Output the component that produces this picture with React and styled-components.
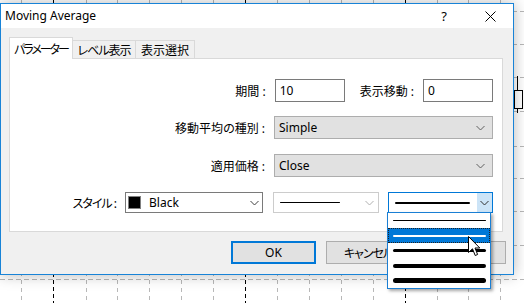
import React from 'react';
import styled, { createGlobalStyle } from 'styled-components';

const Global = createGlobalStyle`
  html, body {
    margin: 0;
    padding: 0;
    background: #fff;
  }
  body {
    font-family: "Noto Sans", "Noto Sans CJK JP", sans-serif;
    font-size: 12px;
    color: #000;
    font-feature-settings: "palt";
  }
`;

const Stage = styled.div`
  position: relative;
  width: 524px;
  height: 303px;
  overflow: hidden;
  background: #fff;
`;

const Chart = styled.svg`
  position: absolute;
  left: 0;
  top: 0;
`;

const Window = styled.div`
  position: absolute;
  left: 0;
  top: 3px;
  width: 514px;
  height: 272px;
  box-sizing: border-box;
  border: 1px solid #1883d7;
  background: #f0f0f0;
  display: flex;
  flex-direction: column;
  box-shadow: 0 0 14px rgba(0, 0, 0, 0.28);
`;

const TitleBar = styled.div`
  height: 24px;
  background: #fff;
  display: flex;
  align-items: center;
  padding-left: 4px;
`;

const Title = styled.div`
  flex: 1;
  padding-bottom: 2px;
`;

const CaptionButton = styled.div`
  width: 46px;
  height: 24px;
  display: flex;
  align-items: center;
  justify-content: center;
  font-size: 13px;
`;

const Body = styled.div`
  flex: 1;
  padding: 9px 10px 10px 8px;
  display: flex;
  flex-direction: column;
`;

const TabStrip = styled.div`
  display: flex;
  align-items: flex-end;
  height: 21px;
`;

const Tab = styled.div`
  position: relative;
  box-sizing: border-box;
  width: ${(p) => p.$w}px;
  display: flex;
  align-items: center;
  justify-content: center;
  white-space: nowrap;
  letter-spacing: ${(p) => p.$ls || 0}px;
  border: 1px solid #d9d9d9;
  border-bottom: none;
  ${(p) => (p.$first ? '' : 'border-left: none;')}
  height: ${(p) => (p.$active ? '22px' : '18px')};
  margin-bottom: ${(p) => (p.$active ? '-1px' : '0')};
  background: ${(p) => (p.$active ? '#fff' : '#f0f0f0')};
  z-index: ${(p) => (p.$active ? 1 : 0)};
`;

const Panel = styled.div`
  height: 174px;
  box-sizing: border-box;
  background: #fff;
  border: 1px solid #d9d9d9;
  padding: 20px 9px 0 0;
  display: flex;
  flex-direction: column;
  gap: 15px;
`;

const Row = styled.div`
  display: flex;
  justify-content: flex-end;
  align-items: center;
  height: ${(p) => p.$h || 23}px;
  gap: 9px;
`;

const Label = styled.div`
  white-space: nowrap;
  letter-spacing: ${(p) => p.$ls || 0}px;
  margin-left: ${(p) => p.$ml || 0}px;
`;

const Field = styled.div`
  box-sizing: border-box;
  width: 70px;
  height: 23px;
  border: 1px solid #7a7a7a;
  background: #fff;
  display: flex;
  align-items: center;
  padding-left: 4px;
`;

const Select = styled.div`
  box-sizing: border-box;
  width: 219px;
  height: 23px;
  border: 1px solid #adadad;
  background: #e1e1e1;
  display: flex;
  align-items: center;
  justify-content: space-between;
  padding: 0 7px 0 4px;
`;

const Combo = styled.div`
  position: relative;
  box-sizing: border-box;
  width: ${(p) => p.$w}px;
  height: 21px;
  border: 1px solid ${(p) => p.$border};
  background: #fff;
  display: flex;
  align-items: center;
  margin-left: ${(p) => p.$ml || 0}px;
`;

const Swatch = styled.div`
  width: 11px;
  height: 11px;
  background: #000;
  border: 1px solid #808080;
  margin: 0 8px 0 2px;
`;

const ComboText = styled.div`
  flex: 1;
`;

const ComboLine = styled.div`
  flex: 1;
  display: flex;
  align-items: center;
  padding: ${(p) => p.$pad};
`;

const Stroke = styled.div`
  flex: 1;
  height: ${(p) => p.$t}px;
  border-radius: ${(p) => p.$t / 2}px;
  background: ${(p) => p.$color || '#000'};
`;

const ChevronBox = styled.div`
  width: ${(p) => p.$w || 14}px;
  align-self: stretch;
  display: flex;
  align-items: center;
  justify-content: center;
  background: ${(p) => p.$bg || 'transparent'};
`;

const DropList = styled.div`
  position: absolute;
  left: -2px;
  top: 100%;
  width: 104px;
  box-sizing: border-box;
  border: 1px solid #1a7fd4;
  background: #fff;
  box-shadow: 2px 2px 3px rgba(0, 0, 0, 0.35);
  z-index: 5;
`;

const DropItem = styled.div`
  box-sizing: border-box;
  height: 15px;
  display: flex;
  align-items: center;
  padding: 0 3px 0 4px;
  background: ${(p) => (p.$sel ? '#0078d7' : '#fff')};
  border: 1px dotted ${(p) => (p.$sel ? '#202020' : 'transparent')};
`;

const ButtonRow = styled.div`
  margin-top: 9px;
  margin-right: -3px;
  display: flex;
  justify-content: flex-end;
  gap: 10px;
`;

const Button = styled.div`
  box-sizing: border-box;
  width: 85px;
  height: 23px;
  display: flex;
  align-items: center;
  justify-content: center;
  white-space: nowrap;
  letter-spacing: ${(p) => p.$ls || 0}px;
  background: #e1e1e1;
  border: ${(p) => (p.$default ? '2px solid #0078d7' : '1px solid #adadad')};
`;

const Cursor = styled.svg`
  position: absolute;
  left: 468px;
  top: 236px;
  z-index: 10;
`;

function Chevron({ color = '#606060' }) {
  return (
    <svg width="9" height="6" viewBox="0 0 9 6">
      <path d="M0.5 1 L4.5 5 L8.5 1" fill="none" stroke={color} strokeWidth="1" />
    </svg>
  );
}

function ChartBackground() {
  const gray = [21, 86, 117, 149, 181, 213, 277, 309, 341, 373, 437, 468, 500];
  const black = [53, 245, 405];
  const rows = [11, 44, 77, 111, 146, 178, 211, 245, 279];
  return (
    <Chart width="524" height="303" viewBox="0 0 524 303">
      {rows.map((y) => (
        <line key={'h' + y} x1="0" x2="524" y1={y + 0.5} y2={y + 0.5} stroke="#b8b8b8" strokeDasharray="5 3" />
      ))}
      {gray.map((x) => (
        <line key={'g' + x} x1={x + 0.5} x2={x + 0.5} y1="0" y2="303" stroke="#b8b8b8" strokeDasharray="4 4" />
      ))}
      {black.map((x) => (
        <line key={'b' + x} x1={x + 0.5} x2={x + 0.5} y1="0" y2="303" stroke="#000" strokeDasharray="4 3" />
      ))}
      <line x1="517.5" x2="517.5" y1="76" y2="113" stroke="#000" />
      <rect x="514.5" y="90.5" width="8" height="18" fill="#fff" stroke="#000" />
    </Chart>
  );
}

const widths = [1, 2, 3, 4, 5];

export default function App() {
  return (
    <Stage>
      <Global />
      <ChartBackground />
      <Window>
        <TitleBar>
          <Title>Moving Average</Title>
          <CaptionButton>?</CaptionButton>
          <CaptionButton>
            <svg width="11" height="11" viewBox="0 0 11 11">
              <path d="M0.5 0.5 L10.5 10.5 M10.5 0.5 L0.5 10.5" stroke="#000" strokeWidth="1" />
            </svg>
          </CaptionButton>
        </TitleBar>
        <Body>
          <TabStrip>
            <Tab $active $first $w={64} $ls={-2}>パラメーター</Tab>
            <Tab $w={63} $ls={-1}>レベル表示</Tab>
            <Tab $w={59}>表示選択</Tab>
          </TabStrip>
          <Panel>
            <Row style={{ marginBottom: -1 }}>
              <Label>期間 :</Label>
              <Field>10</Field>
              <Label $ml={6}>表示移動 :</Label>
              <Field>0</Field>
            </Row>
            <Row>
              <Label>移動平均の種別 :</Label>
              <Select>
                Simple
                <Chevron />
              </Select>
            </Row>
            <Row>
              <Label>適用価格 :</Label>
              <Select>
                Close
                <Chevron />
              </Select>
            </Row>
            <Row $h={21}>
              <Label $ls={-1}>スタイル :</Label>
              <Combo $w={138} $border="#7a7a7a">
                <Swatch />
                <ComboText>Black</ComboText>
                <ChevronBox $w={16}>
                  <Chevron color="#404040" />
                </ChevronBox>
              </Combo>
              <Combo $w={106} $border="#cccccc" $ml={1}>
                <ComboLine $pad="0 20px 0 6px">
                  <Stroke $t={1} />
                </ComboLine>
                <ChevronBox $w={18}>
                  <Chevron color="#b0b0b0" />
                </ChevronBox>
              </Combo>
              <Combo $w={105} $border="#0078d7">
                <ComboLine $pad="0 7px 0 6px">
                  <Stroke $t={2} />
                </ComboLine>
                <ChevronBox $w={15} $bg="#cce4f7">
                  <Chevron color="#303030" />
                </ChevronBox>
                <DropList>
                  {widths.map((t) => (
                    <DropItem key={t} $sel={t === 2}>
                      <Stroke $t={t} $color={t === 2 ? '#fff' : '#000'} />
                    </DropItem>
                  ))}
                </DropList>
              </Combo>
            </Row>
          </Panel>
          <ButtonRow>
            <Button $default>OK</Button>
            <Button $ls={-1}>キャンセル</Button>
            <Button $ls={-1}>リセット</Button>
          </ButtonRow>
        </Body>
      </Window>
      <Cursor width="13" height="21" viewBox="0 0 13 21">
        <path
          d="M0.5 0.5 L0.5 16.5 L4.5 12.8 L7.2 19.5 L9.6 18.5 L7 12 L11.8 12 Z"
          fill="#fff"
          stroke="#000"
          strokeWidth="1"
          strokeLinejoin="miter"
        />
      </Cursor>
    </Stage>
  );
}
